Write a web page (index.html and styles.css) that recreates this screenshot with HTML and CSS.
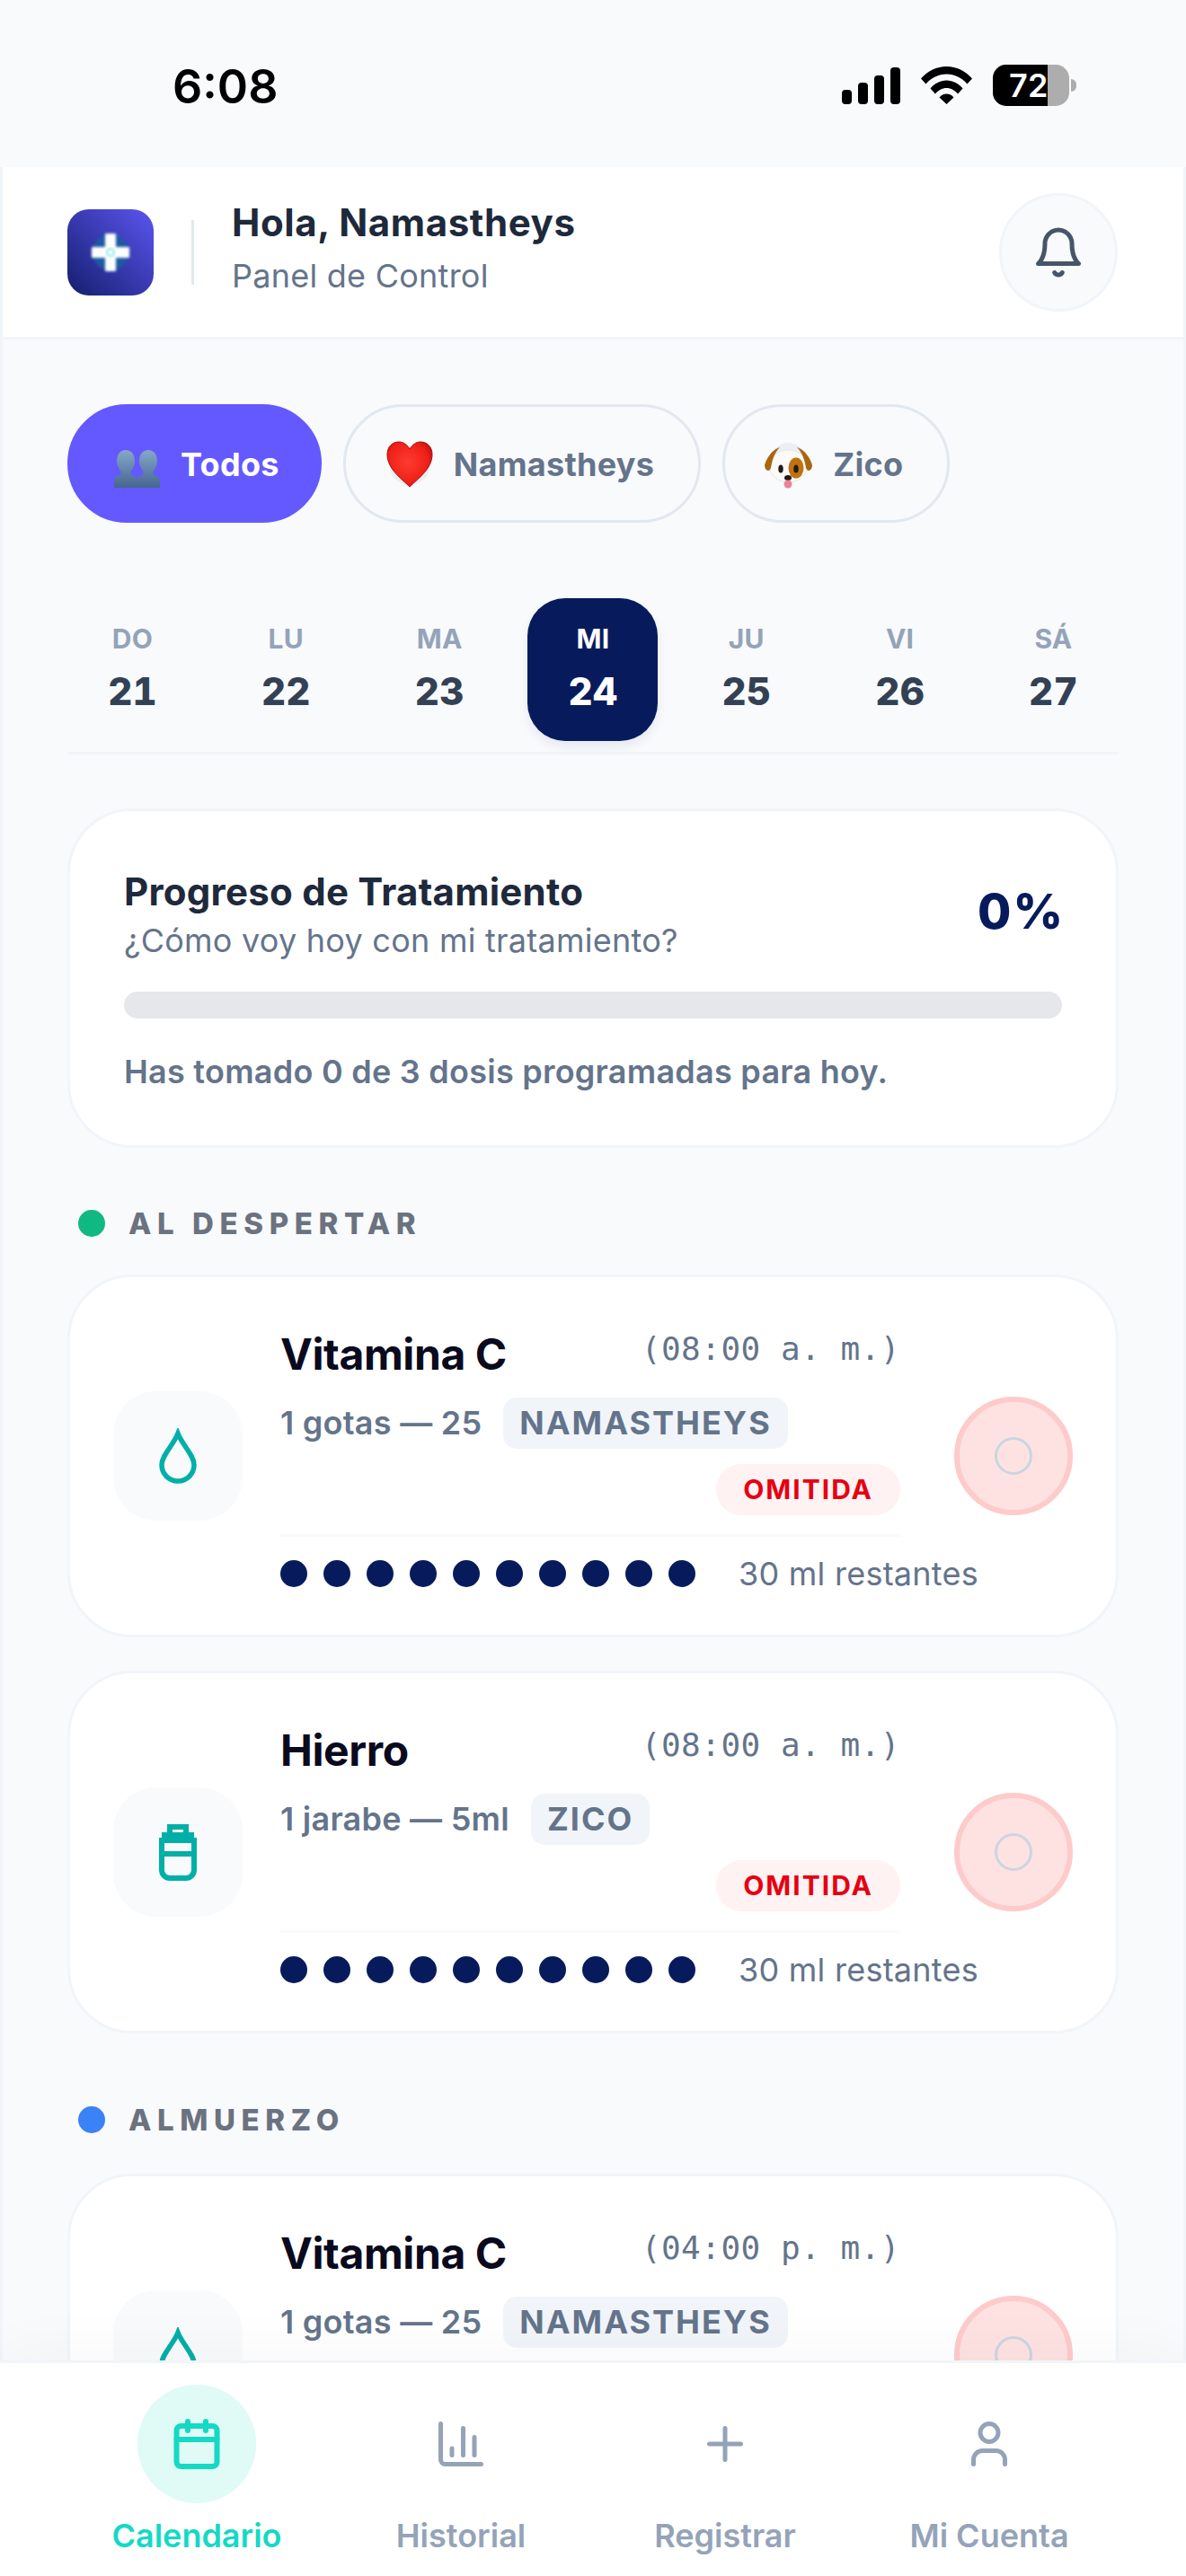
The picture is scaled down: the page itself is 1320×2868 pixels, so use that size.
FILE: index.html
```html
<!DOCTYPE html>
<html lang="es">

<head>
    <meta charset="UTF-8">
    <meta name="viewport" content="width=device-width, initial-scale=1.0">
    <title>Panel de Control</title>
    <link rel="stylesheet" href="styles.css">
</head>

<body>
    <div class="screen">
        <div class="status-bar">
            <span class="status-time">6:08</span>
            <div class="status-icons">
                <svg class="status-signal" width="65" height="41" viewBox="0 0 65 41" fill="#000">
                    <rect x="0" y="25" width="11" height="16" rx="4" />
                    <rect x="18" y="17" width="11" height="24" rx="4" />
                    <rect x="36" y="9" width="11" height="32" rx="4" />
                    <rect x="54" y="0" width="11" height="41" rx="4" />
                </svg>
                <svg class="status-wifi" width="57" height="42" viewBox="0 0 57 42" fill="#000">
                    <path d="M0 13.5C7.5 5 17.5 0 28.5 0S49.5 5 57 13.5L51.5 19.5C45.5 12.5 37.5 8.5 28.5 8.5S11.5 12.5 5.5 19.5Z" />
                    <path d="M10.5 24.5C15 19 21.5 15.5 28.5 15.5S42 19 46.5 24.5L41 30.5C37.5 26.5 33.5 24 28.5 24S19.5 26.5 16 30.5Z" />
                    <path d="M20.5 34.5C22.5 32 25.5 30.5 28.5 30.5S34.5 32 36.5 34.5L28.5 42Z" />
                </svg>
                <div class="battery">
                    <div class="battery-body">
                        <div class="battery-fill"></div>
                        <span class="battery-text">72</span>
                    </div>
                    <div class="battery-nub"></div>
                </div>
            </div>
        </div>

        <div class="app">
            <header class="top-bar">
                <div class="brand">
                    <div class="logo">
                        <svg width="96" height="96" viewBox="0 0 96 96">
                            <defs>
                                <filter id="soft" x="-20%" y="-20%" width="140%" height="140%">
                                    <feGaussianBlur stdDeviation="1.5" />
                                </filter>
                            </defs>
                            <circle cx="48" cy="48" r="20" fill="#1b5aa3" filter="url(#soft)" />
                            <path d="M43 28h10v15h15v10H53v15H43V53H28V43h15z" fill="#fff" stroke="#fff" stroke-width="2" stroke-linejoin="round" filter="url(#soft)" />
                            <circle cx="48" cy="48" r="4" fill="none" stroke="#7fe8e0" stroke-width="2" filter="url(#soft)" />
                        </svg>
                    </div>
                    <div class="brand-divider"></div>
                    <div class="brand-text">
                        <div class="greeting">Hola, Namastheys</div>
                        <div class="panel-label">Panel de Control</div>
                    </div>
                </div>
                <button class="bell-btn">
                    <svg width="60" height="60" viewBox="0 0 24 24" fill="none" stroke="#475569" stroke-width="2" stroke-linecap="round" stroke-linejoin="round">
                        <path d="M6 8a6 6 0 0 1 12 0c0 7 3 9 3 9H3s3-2 3-9" />
                        <path d="M10.3 21a1.94 1.94 0 0 0 3.4 0" />
                    </svg>
                </button>
            </header>

            <main class="content">
                <div class="chips">
                    <button class="chip chip-active">
                        <svg class="emoji-busts" width="51" height="42" viewBox="0 0 51 42">
                            <defs>
                                <linearGradient id="bust" x1="0" y1="0" x2="0" y2="1">
                                    <stop offset="0" stop-color="#86a8c8" />
                                    <stop offset="1" stop-color="#44668f" />
                                </linearGradient>
                            </defs>
                            <path d="M13 0C19 0 23 5 23 12C23 17 21 20 19 23C18 25 18 27 20 28L25 31C26 32 26 33 26 35V42H0V35C0 33 0 32 1 31L6 28C8 27 8 25 7 23C5 20 3 17 3 12C3 5 7 0 13 0Z" fill="url(#bust)" />
                            <path transform="translate(25 0)" d="M13 0C19 0 23 5 23 12C23 17 21 20 19 23C18 25 18 27 20 28L25 31C26 32 26 33 26 35V42H0V35C0 33 0 32 1 31L6 28C8 27 8 25 7 23C5 20 3 17 3 12C3 5 7 0 13 0Z" fill="url(#bust)" />
                        </svg>
                        <span>Todos</span>
                    </button>
                    <button class="chip">
                        <svg class="chip-emoji" width="54" height="52" viewBox="0 0 54 52">
                            <defs>
                                <radialGradient id="heart" cx="0.45" cy="0.45" r="0.65">
                                    <stop offset="0" stop-color="#ff3b2f" />
                                    <stop offset="0.7" stop-color="#ee2018" />
                                    <stop offset="1" stop-color="#b80c0a" />
                                </radialGradient>
                            </defs>
                            <ellipse cx="27" cy="28" rx="22" ry="21" fill="#e2e8f0" opacity="0.7" />
                            <path d="M27 51C18 42 2 31 2 15 2 6 8 1 15 1c5 0 9 3 12 8 3-5 7-8 12-8 7 0 13 5 13 14 0 16-16 27-25 36z" fill="url(#heart)" stroke="#a80a08" stroke-width="1" />
                        </svg>
                        <span>Namastheys</span>
                    </button>
                    <button class="chip">
                        <svg class="chip-emoji emoji-dog" width="54" height="54" viewBox="0 0 54 54">
                            <circle cx="26.5" cy="22" r="21" fill="#e2e8f0" opacity="0.6" />
                            <ellipse cx="26.5" cy="27" rx="21" ry="18" fill="#fbfaf8" stroke="#e0dcd6" stroke-width="0.6" />
                            <path d="M17 6C9 8 2 18 0 26c0 3 2 6 4 6 2 0 3-3 3.5-6C9 18 12 11 17 6z" fill="#a9660f" />
                            <path d="M36 6c8 2 15 12 17 20 0 3-2 6-4 6-2 0-3-3-3.5-6C44 18 41 11 36 6z" fill="#a9660f" />
                            <ellipse cx="35" cy="29" rx="8.5" ry="11.5" fill="#c0720f" />
                            <ellipse cx="18" cy="30" rx="2.7" ry="4.5" fill="#1e1b18" />
                            <ellipse cx="35" cy="30" rx="2.7" ry="4.5" fill="#1e1b18" />
                            <ellipse cx="26" cy="40" rx="4" ry="3" fill="#1e1b18" />
                            <circle cx="26" cy="47" r="4.5" fill="#ef8098" />
                        </svg>
                        <span>Zico</span>
                    </button>
                </div>

                <div class="week">
                    <div class="day"><span class="day-name">DO</span><span class="day-num">21</span></div>
                    <div class="day"><span class="day-name">LU</span><span class="day-num">22</span></div>
                    <div class="day"><span class="day-name">MA</span><span class="day-num">23</span></div>
                    <div class="day day-active"><span class="day-name">MI</span><span class="day-num">24</span></div>
                    <div class="day"><span class="day-name">JU</span><span class="day-num">25</span></div>
                    <div class="day"><span class="day-name">VI</span><span class="day-num">26</span></div>
                    <div class="day"><span class="day-name">SÁ</span><span class="day-num">27</span></div>
                </div>

                <section class="progress-card">
                    <div class="progress-head">
                        <div>
                            <div class="progress-title">Progreso de Tratamiento</div>
                            <div class="progress-sub">¿Cómo voy hoy con mi tratamiento?</div>
                        </div>
                        <div class="progress-pct">0%</div>
                    </div>
                    <div class="progress-track"></div>
                    <div class="progress-note">Has tomado 0 de 3 dosis programadas para hoy.</div>
                </section>

                <div class="section-label">
                    <span class="section-dot dot-green"></span>
                    <span>AL DESPERTAR</span>
                </div>

                <article class="med-card">
                    <div class="med-icon">
                        <svg width="42" height="62" viewBox="0 0 42 62" fill="none" stroke="#00afa8" stroke-width="5.5" stroke-miterlimit="8">
                            <path d="M21 6C26 19 39 30 39 41A18 18 0 0 1 3 41C3 30 16 19 21 6Z" />
                        </svg>
                    </div>
                    <div class="med-body">
                        <div class="med-top">
                            <span class="med-name">Vitamina C</span>
                            <span class="med-time">(08:00 a. m.)</span>
                        </div>
                        <div class="med-meta">
                            <span>1 gotas — 25</span>
                            <span class="owner-tag">NAMASTHEYS</span>
                        </div>
                        <div class="med-status"><span class="status-pill">OMITIDA</span></div>
                        <div class="med-stock">
                            <div class="stock-dots"><i></i><i></i><i></i><i></i><i></i><i></i><i></i><i></i><i></i><i></i></div>
                            <span class="stock-text">30 ml restantes</span>
                        </div>
                    </div>
                    <button class="check-btn"><span class="check-ring"></span></button>
                </article>

                <article class="med-card">
                    <div class="med-icon">
                        <svg width="42" height="63" viewBox="0 0 42 63">
                            <path fill="#00afa8" fill-rule="evenodd" d="M9 0H33V9H39V15H42V51A12 12 0 0 1 30 63H12A12 12 0 0 1 0 51V15H3V9H9ZM15 6V9H27V6ZM6 21V30H36V21ZM6 36V51A6 6 0 0 0 12 57H30A6 6 0 0 0 36 51V36Z" />
                        </svg>
                    </div>
                    <div class="med-body">
                        <div class="med-top">
                            <span class="med-name">Hierro</span>
                            <span class="med-time">(08:00 a. m.)</span>
                        </div>
                        <div class="med-meta">
                            <span>1 jarabe — 5ml</span>
                            <span class="owner-tag">ZICO</span>
                        </div>
                        <div class="med-status"><span class="status-pill">OMITIDA</span></div>
                        <div class="med-stock">
                            <div class="stock-dots"><i></i><i></i><i></i><i></i><i></i><i></i><i></i><i></i><i></i><i></i></div>
                            <span class="stock-text">30 ml restantes</span>
                        </div>
                    </div>
                    <button class="check-btn"><span class="check-ring"></span></button>
                </article>

                <div class="section-label section-label-next">
                    <span class="section-dot dot-blue"></span>
                    <span>ALMUERZO</span>
                </div>

                <article class="med-card">
                    <div class="med-icon">
                        <svg width="42" height="62" viewBox="0 0 42 62" fill="none" stroke="#00afa8" stroke-width="5.5" stroke-miterlimit="8">
                            <path d="M21 6C26 19 39 30 39 41A18 18 0 0 1 3 41C3 30 16 19 21 6Z" />
                        </svg>
                    </div>
                    <div class="med-body">
                        <div class="med-top">
                            <span class="med-name">Vitamina C</span>
                            <span class="med-time">(04:00 p. m.)</span>
                        </div>
                        <div class="med-meta">
                            <span>1 gotas — 25</span>
                            <span class="owner-tag">NAMASTHEYS</span>
                        </div>
                        <div class="med-status"><span class="status-pill">OMITIDA</span></div>
                        <div class="med-stock">
                            <div class="stock-dots"><i></i><i></i><i></i><i></i><i></i><i></i><i></i><i></i><i></i><i></i></div>
                            <span class="stock-text">30 ml restantes</span>
                        </div>
                    </div>
                    <button class="check-btn"><span class="check-ring"></span></button>
                </article>
            </main>
        </div>

        <nav class="bottom-nav">
            <div class="nav-item nav-active">
                <div class="nav-icon">
                    <svg width="60" height="60" viewBox="0 0 24 24" fill="none" stroke="currentColor" stroke-width="2.4" stroke-linecap="round" stroke-linejoin="round">
                        <path d="M8 2v4" />
                        <path d="M16 2v4" />
                        <rect x="3" y="4" width="18" height="18" rx="2" />
                        <path d="M3 10h18" />
                    </svg>
                </div>
                <span>Calendario</span>
            </div>
            <div class="nav-item">
                <div class="nav-icon">
                    <svg width="60" height="60" viewBox="0 0 24 24" fill="none" stroke="currentColor" stroke-width="2" stroke-linecap="round" stroke-linejoin="round">
                        <path d="M3 3v16a2 2 0 0 0 2 2h16" />
                        <path d="M18 17V9" />
                        <path d="M13 17V5" />
                        <path d="M8 17v-3" />
                    </svg>
                </div>
                <span>Historial</span>
            </div>
            <div class="nav-item">
                <div class="nav-icon">
                    <svg width="60" height="60" viewBox="0 0 24 24" fill="none" stroke="currentColor" stroke-width="2" stroke-linecap="round" stroke-linejoin="round">
                        <path d="M5 12h14" />
                        <path d="M12 5v14" />
                    </svg>
                </div>
                <span>Registrar</span>
            </div>
            <div class="nav-item">
                <div class="nav-icon">
                    <svg width="60" height="60" viewBox="0 0 24 24" fill="none" stroke="currentColor" stroke-width="2" stroke-linecap="round" stroke-linejoin="round">
                        <path d="M19 21v-2a4 4 0 0 0-4-4H9a4 4 0 0 0-4 4v2" />
                        <circle cx="12" cy="7" r="4" />
                    </svg>
                </div>
                <span>Mi Cuenta</span>
            </div>
        </nav>
    </div>
</body>

</html>
```

FILE: styles.css
```css
* {
    box-sizing: border-box;
}

body {
    margin: 0;
    font-family: Inter, "Noto Sans", sans-serif;
    letter-spacing: 0.25px;
    background-color: #f8fafc;
    color: #64748b;
}

button {
    font-family: inherit;
    letter-spacing: inherit;
    padding: 0;
    margin: 0;
    cursor: pointer;
}

.screen {
    display: flex;
    flex-direction: column;
    width: 1320px;
    height: 2868px;
    overflow: hidden;
}

/* status bar */
.status-bar {
    display: flex;
    justify-content: space-between;
    align-items: center;
    flex-shrink: 0;
    height: 186px;
    padding: 4px 122px 0 192px;
    background-color: #f9fafc;
}

.status-time {
    margin-top: 3px;
    font-size: 52px;
    font-weight: 600;
    letter-spacing: 0;
    color: #000;
}

.status-icons {
    display: flex;
    align-items: center;
    gap: 23px;
}

.battery {
    display: flex;
    align-items: center;
    gap: 2px;
}

.battery-body {
    position: relative;
    width: 85px;
    height: 46px;
    border-radius: 15px;
    overflow: hidden;
    background-color: #adadad;
}

.battery-fill {
    width: 61px;
    height: 100%;
    background-color: #000;
}

.battery-text {
    position: absolute;
    top: 0;
    left: 18px;
    font-size: 36px;
    font-weight: 600;
    line-height: 46px;
    color: #fff;
}

.battery-nub {
    width: 6px;
    height: 14px;
    border-radius: 0 7px 7px 0;
    background-color: #adadad;
}

/* app frame */
.app {
    display: flex;
    flex-direction: column;
    flex: 1;
    min-height: 0;
    border-left: 3px solid #f1f5f9;
    border-right: 3px solid #f1f5f9;
}

.top-bar {
    display: flex;
    justify-content: space-between;
    align-items: center;
    flex-shrink: 0;
    height: 192px;
    padding: 0 73px 0 72px;
    background-color: #fff;
    border-bottom: 3px solid #f1f5f9;
}

.brand {
    display: flex;
    align-items: center;
}

.logo {
    width: 96px;
    height: 96px;
    border-radius: 24px;
    overflow: hidden;
    background: linear-gradient(45deg, #141e6e, #5b55f0);
}

.logo svg {
    display: block;
}

.brand-divider {
    width: 3px;
    height: 72px;
    margin: 0 42px;
    background-color: #e2e8f0;
}

.brand-text {
    margin-bottom: 9px;
}

.greeting {
    font-size: 42px;
    font-weight: 700;
    line-height: 54px;
    letter-spacing: 0.6px;
    color: #1e293b;
}

.panel-label {
    margin-top: 8px;
    font-size: 36px;
    line-height: 48px;
    color: #64748b;
}

.bell-btn {
    display: flex;
    justify-content: center;
    align-items: center;
    width: 132px;
    height: 132px;
    border-radius: 50%;
    border: 3px solid #f1f5f9;
    background-color: #f8fafc;
}

.content {
    flex: 1;
    min-height: 0;
    overflow: hidden;
    padding: 72px 72px 0;
}

/* filter chips */
.chips {
    display: flex;
    gap: 24px;
}

.chip {
    display: flex;
    align-items: center;
    gap: 22px;
    height: 132px;
    padding: 2px 49px 0 44px;
    border-radius: 66px;
    border: 3px solid #e2e8f0;
    background-color: #f8fafc;
    font-size: 36px;
    font-weight: 700;
    letter-spacing: 0.3px;
    color: #64748b;
}

.chip-active {
    gap: 23px;
    padding: 2px 44px 0 49px;
    border-color: #6359ff;
    background-color: #6359ff;
    color: #fff;
}

.chip-emoji {
    flex-shrink: 0;
}

.emoji-busts {
    flex-shrink: 0;
    margin-top: 10px;
}

.emoji-dog {
    margin-top: 4px;
}

/* week strip */
.week {
    display: flex;
    justify-content: space-between;
    margin-top: 84px;
    padding-bottom: 12px;
    border-bottom: 3px solid #f1f5f9;
}

.day {
    display: flex;
    flex-direction: column;
    align-items: center;
    justify-content: center;
    gap: 16px;
    width: 145px;
    height: 159px;
    padding-bottom: 4px;
    border-radius: 42px;
}

.day-name {
    font-size: 30px;
    font-weight: 700;
    line-height: 36px;
    color: #94a3b8;
}

.day-num {
    font-size: 42px;
    font-weight: 800;
    font-variant-numeric: tabular-nums;
    line-height: 50px;
    color: #334155;
}

.day-active {
    background-color: #071b5c;
    box-shadow: 0 6px 12px rgba(7, 27, 92, 0.08);
}

.day-active .day-name,
.day-active .day-num {
    color: #fff;
}

/* progress */
.progress-card {
    margin-top: 60px;
    padding: 65px 60px 60px;
    background-color: #fff;
    border: 3px solid #f1f5f9;
    border-radius: 72px;
}

.progress-head {
    display: flex;
    justify-content: space-between;
    align-items: center;
}

.progress-title {
    font-size: 42px;
    font-weight: 700;
    line-height: 50px;
    color: #1e293b;
}

.progress-sub {
    margin-top: 7px;
    font-size: 36px;
    line-height: 44px;
    color: #64748b;
}

.progress-pct {
    margin-right: -3px;
    margin-bottom: 8px;
    font-size: 54px;
    font-weight: 800;
    letter-spacing: 2px;
    color: #071b5c;
}

.progress-track {
    height: 30px;
    margin-top: 35px;
    border-radius: 15px;
    background-color: #e5e7eb;
}

.progress-note {
    margin-top: 37px;
    font-size: 36px;
    font-weight: 600;
    line-height: 44px;
    color: #64748b;
}

/* sections */
.section-label {
    display: flex;
    align-items: center;
    gap: 26px;
    margin: 60px 0 33px 12px;
    font-size: 33px;
    font-weight: 800;
    line-height: 48px;
    letter-spacing: 6.6px;
    color: #6b7280;
}

.section-label-next {
    margin-top: 72px;
    margin-bottom: 36px;
}

.section-dot {
    width: 30px;
    height: 30px;
    border-radius: 50%;
}

.dot-green {
    background-color: #10b981;
}

.dot-blue {
    background-color: #3b82f6;
}

/* medication cards */
.med-card {
    display: flex;
    align-items: center;
    height: 404px;
    margin-bottom: 37px;
    padding: 0 48px;
    background-color: #fff;
    border: 3px solid #f1f5f9;
    border-radius: 72px;
}

.med-icon {
    display: flex;
    justify-content: center;
    align-items: center;
    flex-shrink: 0;
    width: 144px;
    height: 144px;
    margin-right: 42px;
    border-radius: 48px;
    background-color: #f8fafc;
}

.med-body {
    flex-shrink: 0;
    width: 690px;
    margin-right: 60px;
    padding-top: 6px;
}

.med-top {
    display: flex;
    justify-content: space-between;
}

.med-name {
    font-size: 48px;
    font-weight: 700;
    line-height: 66px;
    letter-spacing: -0.4px;
    color: #0a0a1e;
}

.med-time {
    margin-top: 3px;
    font-family: "DejaVu Sans Mono", monospace;
    font-size: 36px;
    line-height: 48px;
    letter-spacing: 0.5px;
    color: #64748b;
}

.med-meta {
    display: flex;
    align-items: center;
    gap: 24px;
    margin-top: 15px;
    font-size: 36px;
    font-weight: 600;
    color: #64748b;
}

.owner-tag {
    height: 57px;
    padding: 0 18px;
    border-radius: 15px;
    background-color: #f1f5f9;
    font-weight: 700;
    line-height: 57px;
    letter-spacing: 2px;
}

.med-status {
    display: flex;
    justify-content: flex-end;
    margin-top: 17px;
}

.status-pill {
    height: 57px;
    padding: 0 30px;
    border-radius: 29px;
    background-color: #fef2f2;
    font-size: 30px;
    font-weight: 700;
    line-height: 57px;
    letter-spacing: 2px;
    color: #e60012;
}

.med-stock {
    display: flex;
    align-items: center;
    gap: 48px;
    width: 780px;
    margin-top: 21px;
    padding-top: 22px;
    background: linear-gradient(#f8fafc, #f8fafc) no-repeat 0 0 / 690px 3px;
}

.stock-dots {
    display: flex;
    gap: 18px;
}

.stock-dots i {
    width: 30px;
    height: 30px;
    border-radius: 50%;
    background-color: #071b5c;
}

.stock-text {
    font-size: 36px;
    line-height: 44px;
    color: #64748b;
    white-space: nowrap;
}

.check-btn {
    display: flex;
    justify-content: center;
    align-items: center;
    flex-shrink: 0;
    width: 132px;
    height: 132px;
    border-radius: 50%;
    border: 6px solid #fecaca;
    background-color: #fee2e2;
}

.check-ring {
    width: 42px;
    height: 42px;
    border-radius: 50%;
    border: 3px solid #cbd5e1;
}

/* bottom nav */
.bottom-nav {
    display: flex;
    flex-shrink: 0;
    position: relative;
    height: 240px;
    padding: 24px 72px 0;
    background-color: #fff;
    border-top: 3px solid #f1f5f9;
    box-shadow: 0 -12px 60px rgba(0, 0, 0, 0.03);
}

.nav-item {
    display: flex;
    flex-direction: column;
    align-items: center;
    flex: 1;
    font-size: 36px;
    font-weight: 600;
    line-height: 44px;
    letter-spacing: 0;
    color: #94a3b8;
}

.nav-icon {
    display: flex;
    justify-content: center;
    align-items: center;
    width: 132px;
    height: 132px;
    margin-bottom: 14px;
    border-radius: 50%;
}

.nav-active {
    color: #14d9c4;
}

.nav-active .nav-icon {
    background-color: #e0faf6;
}
```
